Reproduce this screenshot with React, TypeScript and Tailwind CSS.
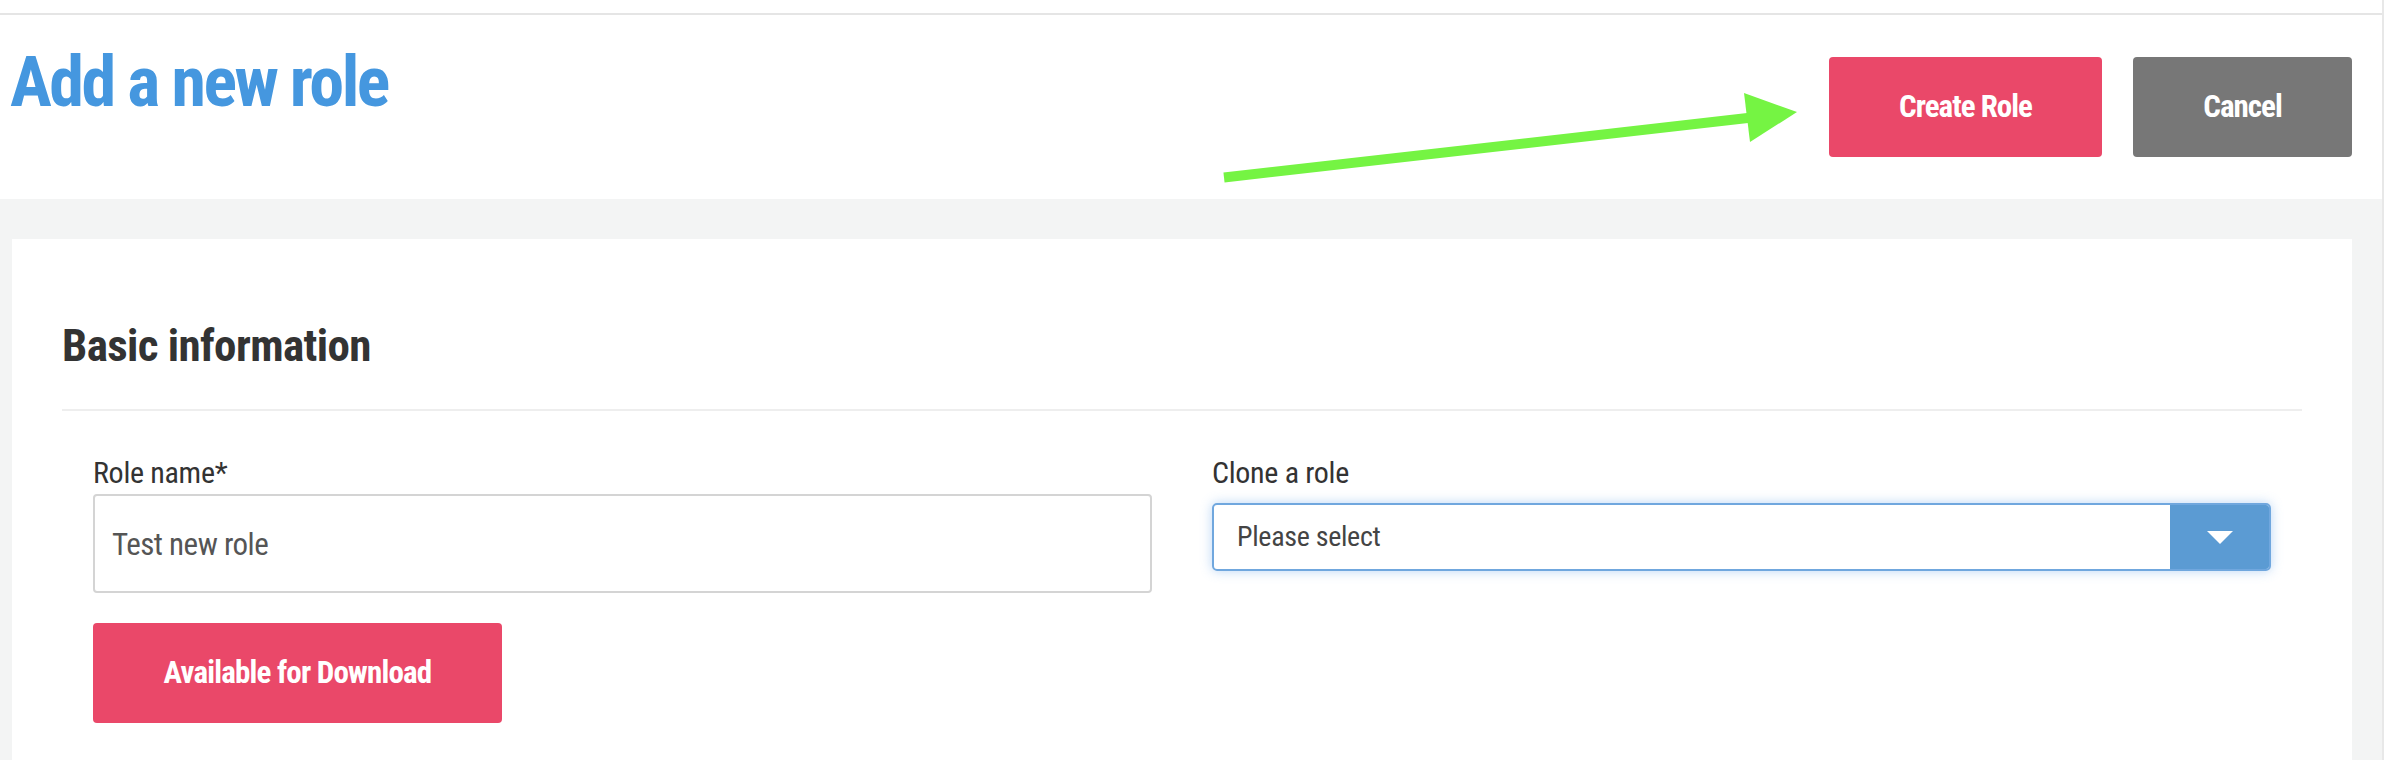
import React from 'react';

function GreenArrow() {
  return (
    <svg
      className="absolute left-0 top-0 pointer-events-none"
      width="2384"
      height="760"
      viewBox="0 0 2384 760"
    >
      <line x1="1224" y1="177.5" x2="1752" y2="117.5" stroke="#75f443" strokeWidth="10" />
      <polygon points="1744,93 1797,112 1750,142" fill="#75f443" />
    </svg>
  );
}

export default function App() {
  return (
    <div className="relative w-[2384px] h-[760px] overflow-hidden bg-white flex font-['Roboto_Condensed',Roboto,sans-serif] [font-stretch:75%]">
      <div className="flex-1 flex flex-col">
        {/* top strip */}
        <div className="h-[13px]" />
        <div className="h-[2px] bg-[#e5e5e5]" />

        {/* Header */}
        <div className="h-[184px] flex items-start justify-between pl-[10px] pr-[30px] pt-[32px]">
          <h1 className="text-[70px] leading-none font-bold tracking-[-2.5px] text-[#4597df]">Add a new role</h1>
          <div className="flex items-center gap-[31px] mt-[10px]">
            <button className="w-[273px] h-[100px] rounded-[4px] bg-[#ea4869] text-white text-[31px] font-bold tracking-[-1px]">
              Create Role
            </button>
            <button className="w-[219px] h-[100px] rounded-[4px] bg-[#777777] text-white text-[31px] font-bold tracking-[-1px]">
              Cancel
            </button>
          </div>
        </div>

        {/* Content area */}
        <div className="flex-1 bg-[#f3f4f4] pt-[40px] pl-[12px] pr-[30px]">
          <div className="h-full bg-white px-[50px] pt-[84px]">
            <h2 className="text-[45px] leading-none font-bold tracking-[-0.6px] text-[#333333]">Basic information</h2>
            <div className="h-[2px] bg-[#eeeeee] mt-[41px]" />

            <div className="grid grid-cols-2 gap-x-[60px] px-[31px] pt-[47px]">
              {/* Role name */}
              <div>
                <label className="block text-[30px] leading-none tracking-[-0.3px] text-[#333333]">Role name*</label>
                <div className="mt-[6px] h-[99px] border-2 border-[#d4d4d4] rounded-[4px] flex items-center pl-[17px] pt-[3px] text-[31px] tracking-[-0.5px] text-[#555555]">
                  Test new role
                </div>
                <button className="mt-[30px] w-[409px] h-[100px] rounded-[4px] bg-[#ea4869] text-white text-[31px] font-bold tracking-[-0.8px]">
                  Available for Download
                </button>
              </div>

              {/* Clone a role */}
              <div>
                <label className="block text-[30px] leading-none tracking-[-0.3px] text-[#333333]">Clone a role</label>
                <div className="mt-[15px] h-[68px] border-2 border-[#70a7de] rounded-[5px] flex shadow-[0_0_12px_rgba(102,165,233,0.45)] overflow-hidden">
                  <div className="flex-1 flex items-center pl-[23px] text-[28px] tracking-[-0.3px] text-[#444444]">Please select</div>
                  <div className="w-[99px] bg-[#5b9bd3] flex items-center justify-center">
                    <svg width="26" height="13" viewBox="0 0 26 13">
                      <polygon points="0,0 26,0 13,13" fill="#ffffff" />
                    </svg>
                  </div>
                </div>
              </div>
            </div>
          </div>
        </div>
      </div>

      {/* right edge strip */}
      <div className="w-[2px] bg-[#e8e8e8]" />

      <GreenArrow />
    </div>
  );
}
